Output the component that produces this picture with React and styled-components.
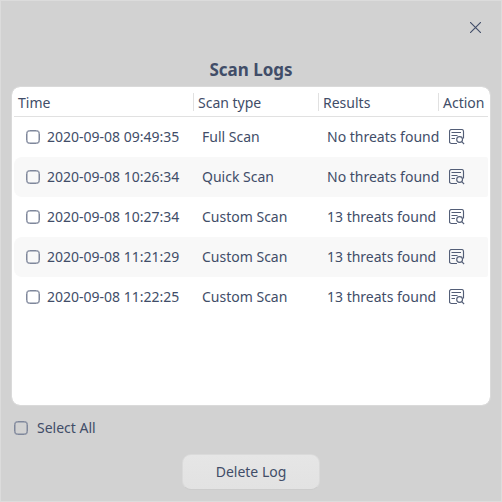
import React from "react";
import styled, { createGlobalStyle } from "styled-components";

const GlobalStyle = createGlobalStyle`
  * { box-sizing: border-box; }
  body { margin: 0; }
`;

const Dialog = styled.main`
  width: 502px;
  height: 502px;
  border: 1px solid #dcdcdc;
  background: #d2d2d2;
  color: #414d68;
  font: 14px/20px "Noto Sans", sans-serif;
  display: flex;
  flex-direction: column;
  align-items: center;
  overflow: hidden;
`;

const TitleBar = styled.header`
  width: 100%;
  height: 50px;
  display: flex;
  justify-content: flex-end;
  align-items: center;
  padding: 2px 10px 0 0;
`;

const CloseButton = styled.button`
  width: 31px;
  height: 31px;
  padding: 0;
  border: 0;
  background: none;
  color: #414d68;
  display: grid;
  place-items: center;
  svg { display: block; }
`;

const Title = styled.h1`
  margin: 7px 0 4px;
  font-size: 17px;
  line-height: 24px;
  font-weight: 700;
`;

const Panel = styled.section`
  width: 480px;
  height: 320px;
  padding: 0 2px;
  border: 1px solid #dadada;
  border-radius: 9px;
  background: #fff;
  background-clip: padding-box;
`;

const HeaderRow = styled.div`
  display: grid;
  grid-template-columns: 180px 125px 120px 49px;
  height: 30px;
  align-items: center;
  border-bottom: 1px solid #e1e1e1;
`;

const HeaderCell = styled.div`
  height: 18px;
  line-height: 20px;
  padding-left: 4px;
  white-space: nowrap;
  border-right: ${(p) => (p.$last ? "0" : "1px solid #e1e1e1")};
`;

const LogRow = styled.div`
  display: grid;
  grid-template-columns: 180px 125px 120px 49px;
  height: 40px;
  align-items: center;
  border-radius: 8px 2px 2px 8px;
  background: ${(p) => (p.$shaded ? "#f8f8f8" : "#fff")};
`;

const Cell = styled.div`
  display: flex;
  align-items: center;
  gap: 7px;
  padding-left: ${(p) => p.$inset ?? 8}px;
  white-space: nowrap;
`;

const CheckBox = styled.input.attrs({ type: "checkbox" })`
  appearance: none;
  flex: none;
  width: 14px;
  height: 14px;
  margin: 0;
  border: 1px solid #7f879b;
  box-shadow: inset 0 0 0 0.5px #7f879b;
  border-radius: 3.5px;
`;

const ActionCell = styled.div`
  padding-left: 10px;
  svg { display: block; }
`;

const SelectAll = styled.label`
  align-self: flex-start;
  display: flex;
  align-items: center;
  gap: 9px;
  margin: 12px 0 0 13px;
`;

const DeleteButton = styled.button`
  width: 138px;
  height: 36px;
  margin-top: 16px;
  padding: 0 0 1px;
  border: 1px solid #dadada;
  border-bottom-color: #cccccc;
  border-radius: 9px;
  background: linear-gradient(#e6e6e6, #e2e2e2);
  color: inherit;
  font: inherit;
`;

const logs = [
  ["2020-09-08 09:49:35", "Full Scan", "No threats found"],
  ["2020-09-08 10:26:34", "Quick Scan", "No threats found"],
  ["2020-09-08 10:27:34", "Custom Scan", "13 threats found"],
  ["2020-09-08 11:21:29", "Custom Scan", "13 threats found"],
  ["2020-09-08 11:22:25", "Custom Scan", "13 threats found"],
];

const DetailsIcon = () => (
  <svg width="16" height="16" viewBox="0 0 16 16" fill="none" stroke="#535e77" strokeWidth="1.15">
    <path d="M8 14.5H2.5a2 2 0 0 1-2-2v-10a2 2 0 0 1 2-2h10a2 2 0 0 1 2 2v7" />
    <path d="M2.5 3.5h9.5M2.5 6.5h6M2.5 9.5h3.5" />
    <circle cx="10.6" cy="10.5" r="2.9" />
    <path d="M12.7 12.6l2.4 2.4" />
  </svg>
);

const CloseIcon = () => (
  <svg width="11" height="11" viewBox="0 0 11 11" fill="none" stroke="currentColor" strokeWidth="1.1">
    <path d="M0 0l11 11M11 0l-11 11" />
  </svg>
);

export default function App() {
  return (
    <>
      <GlobalStyle />
      <Dialog>
        <TitleBar>
          <CloseButton aria-label="Close"><CloseIcon /></CloseButton>
        </TitleBar>
        <Title>Scan Logs</Title>
        <Panel>
          <HeaderRow>
            <HeaderCell>Time</HeaderCell>
            <HeaderCell>Scan type</HeaderCell>
            <HeaderCell>Results</HeaderCell>
            <HeaderCell $last>Action</HeaderCell>
          </HeaderRow>
          {logs.map(([time, type, result], i) => (
            <LogRow key={time} $shaded={i % 2 === 1}>
              <Cell $inset={12}><CheckBox aria-label={time} />{time}</Cell>
              <Cell>{type}</Cell>
              <Cell>{result}</Cell>
              <ActionCell><DetailsIcon /></ActionCell>
            </LogRow>
          ))}
        </Panel>
        <SelectAll><CheckBox />Select All</SelectAll>
        <DeleteButton>Delete Log</DeleteButton>
      </Dialog>
    </>
  );
}
